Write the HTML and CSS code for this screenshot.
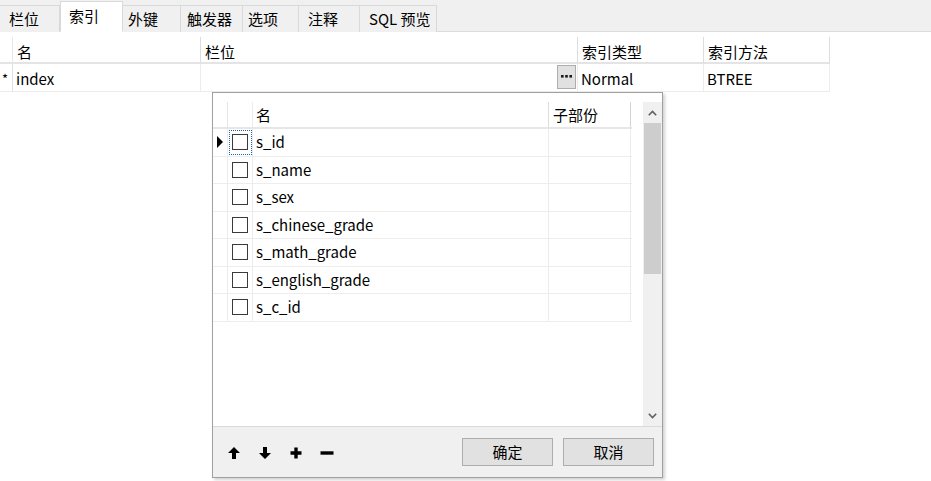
FILE: index.html
```html
<!DOCTYPE html>
<html>
<head>
<meta charset="utf-8">
<link rel="stylesheet" href="styles.css">
</head>
<body>
<div class="tabs">
  <div class="tab w60">栏位</div>
  <div class="tab active w63">索引</div>
  <div class="tab w58 p5">外键</div>
  <div class="tab w62 p6">触发器</div>
  <div class="tab w56 p5">选项</div>
  <div class="tab w61">注释</div>
  <div class="tab w77">SQL 预览</div>
</div>

<div class="grid">
  <div class="hc ind"></div>
  <div class="hc">名</div>
  <div class="hc">栏位</div>
  <div class="hc">索引类型</div>
  <div class="hc">索引方法</div>

  <div class="dc ind">*</div>
  <div class="dc">index</div>
  <div class="dc fieldcell"><span class="dots"><svg width="11" height="3" viewBox="0 0 11 3"><rect x="0" y="0" width="2.6" height="2.6" fill="#1a1a1a"/><rect x="4.2" y="0" width="2.6" height="2.6" fill="#1a1a1a"/><rect x="8.4" y="0" width="2.6" height="2.6" fill="#1a1a1a"/></svg></span></div>
  <div class="dc">Normal</div>
  <div class="dc">BTREE</div>
</div>

<div class="popup">
  <div class="plist">
    <div class="ptable">
      <div class="prow phead">
        <div class="pc pind"></div>
        <div class="pc pchk"></div>
        <div class="pc pname">名</div>
        <div class="pc psub">子部份</div>
      </div>
      <div class="prow">
        <div class="pc pind"><span class="tri"></span></div>
        <div class="pc pchk focus"><span class="cb"></span></div>
        <div class="pc pname">s_id</div>
        <div class="pc psub"></div>
      </div>
      <div class="prow">
        <div class="pc pind"></div>
        <div class="pc pchk"><span class="cb"></span></div>
        <div class="pc pname">s_name</div>
        <div class="pc psub"></div>
      </div>
      <div class="prow">
        <div class="pc pind"></div>
        <div class="pc pchk"><span class="cb"></span></div>
        <div class="pc pname">s_sex</div>
        <div class="pc psub"></div>
      </div>
      <div class="prow">
        <div class="pc pind"></div>
        <div class="pc pchk"><span class="cb"></span></div>
        <div class="pc pname">s_chinese_grade</div>
        <div class="pc psub"></div>
      </div>
      <div class="prow">
        <div class="pc pind"></div>
        <div class="pc pchk"><span class="cb"></span></div>
        <div class="pc pname">s_math_grade</div>
        <div class="pc psub"></div>
      </div>
      <div class="prow">
        <div class="pc pind"></div>
        <div class="pc pchk"><span class="cb"></span></div>
        <div class="pc pname">s_english_grade</div>
        <div class="pc psub"></div>
      </div>
      <div class="prow">
        <div class="pc pind"></div>
        <div class="pc pchk"><span class="cb"></span></div>
        <div class="pc pname">s_c_id</div>
        <div class="pc psub"></div>
      </div>
    </div>
    <div class="scroll">
      <div class="sbtn">
        <svg width="9" height="6" viewBox="0 0 9 6"><path d="M0.8 5.2 L4.5 1.5 L8.2 5.2" fill="none" stroke="#606060" stroke-width="1.6"/></svg>
      </div>
      <div class="thumb"></div>
      <div class="track"></div>
      <div class="sbtn">
        <svg width="9" height="6" viewBox="0 0 9 6"><path d="M0.8 0.8 L4.5 4.5 L8.2 0.8" fill="none" stroke="#606060" stroke-width="1.6"/></svg>
      </div>
    </div>
  </div>
  <div class="pfoot">
    <div class="icons">
      <svg class="ic" width="14" height="14" viewBox="0 0 14 14"><path d="M7 1 L13 7 L9 7 L9 13 L5 13 L5 7 L1 7 Z" fill="#000"/></svg>
      <svg class="ic" width="14" height="14" viewBox="0 0 14 14"><path d="M7 13 L13 7 L9 7 L9 1 L5 1 L5 7 L1 7 Z" fill="#000"/></svg>
      <svg class="ic" width="14" height="14" viewBox="0 0 14 14"><path d="M5.3 1.5 H8.7 V5.3 H12.5 V8.7 H8.7 V12.5 H5.3 V8.7 H1.5 V5.3 H5.3 Z" fill="#000"/></svg>
      <svg class="ic" width="14" height="14" viewBox="0 0 14 14"><rect x="0.5" y="5.3" width="13" height="3.4" fill="#000"/></svg>
    </div>
    <div class="btns">
      <div class="btn">确定</div>
      <div class="btn">取消</div>
    </div>
  </div>
</div>
</body>
</html>
```

FILE: styles.css
```css
* { box-sizing: border-box; }
html, body { margin: 0; padding: 0; background: #fff; }
body {
  width: 931px;
  height: 481px;
  position: relative;
  overflow: hidden;
  font-family: "Noto Sans CJK SC", "Noto Sans", sans-serif;
  font-size: 15px;
  color: #000;
}

.tabs {
  display: flex;
  align-items: flex-end;
  height: 32px;
  background: #f0f0f0;
  border-bottom: 1px solid #dcdcdc;
}
.tab {
  height: 27px;
  line-height: 26px;
  padding-left: 9px;
  border-right: 1px solid #d9d9d9;
  border-top: 1px solid #d9d9d9;
  background: #f0f0f0;
  white-space: nowrap;
  margin-bottom: -1px;
}
.tab.active {
  height: 31px;
  line-height: 28px;
  background: #fff;
  border-left: 1px solid #d9d9d9;
  border-bottom: 1px solid #fff;
  padding-left: 8px;
}
.w60 { width: 60px; }
.w63 { width: 63px; }
.w58 { width: 58px; }
.w62 { width: 62px; }
.w56 { width: 56px; }
.w61 { width: 61px; }
.w77 { width: 77px; }
.p5 { padding-left: 5px; }
.p6 { padding-left: 6px; }

.grid {
  margin-top: 5px;
  display: grid;
  grid-template-columns: 13px 188px 377px 126px 126px;
  grid-template-rows: 27px 28px;
  width: 830px;
}
.hc {
  border-right: 1px solid #dddddd;
  border-bottom: 2px solid #e4e4e4;
  padding-left: 4px;
  padding-top: 2px;
  line-height: 26px;
}
.hc.ind { border-right: 1px solid #e8e8e8; }
.dc {
  border-right: 1px solid #ececec;
  border-bottom: 1px solid #ececec;
  padding-left: 3px;
  padding-top: 2px;
  line-height: 26px;
}
.dc.ind { padding-left: 2px; font-size: 13px; border-right: 1px solid #e0e0e0; }
.fieldcell {
  display: flex;
  justify-content: flex-end;
  align-items: flex-start;
  padding: 1px 1px 0 0;
}
.dots {
  width: 19px;
  height: 24px;
  background: #e1e1e1;
  border: 1px solid #adadad;
  display: flex;
  align-items: center;
  justify-content: center;
  padding-bottom: 2px;
}
.dots svg { display: block; }

.popup {
  position: absolute;
  left: 212px;
  top: 92px;
  width: 451px;
  height: 386px;
  border: 1px solid #a0a0a0;
  box-shadow: 2px 2px 3px rgba(0,0,0,0.18);
  background: #f0f0f0;
  display: flex;
  flex-direction: column;
}
.plist {
  height: 334px;
  background: #fff;
  border-bottom: 1px solid #dadada;
  display: flex;
  padding-top: 9px;
}
.ptable { width: 419px; }
.prow {
  display: flex;
  height: 27.5px;
  border-bottom: 1px solid #ededed;
}
.prow.phead { height: 27px; border-bottom: 2px solid #e6e6e6; }
.pc { height: 100%; line-height: 26px; }
.pind { width: 15px; border-right: 1px solid #ececec; position: relative; }
.pchk { width: 25px; border-right: 1px solid #ececec; display: flex; align-items: center; justify-content: center; }
.pname { width: 296px; padding-left: 3px; border-right: 1px solid #ececec; }
.psub { width: 82px; border-right: 1px solid #ececec; }
.phead .pname { border-right: 1px solid #dddddd; }
.phead .psub { border-right: 1px solid #d4d4d4; padding-left: 4px; }
.phead .pind { border-right: 1px solid #e6e6e6; }

.cb {
  width: 16px;
  height: 16px;
  border: 1px solid #3a3a3a;
  background: #fff;
}
.focus { outline: 1px dotted #1a5fb4; outline-offset: -2px; }
.tri {
  position: absolute;
  left: 4px;
  top: 7px;
  width: 0;
  height: 0;
  border-top: 6px solid transparent;
  border-bottom: 6px solid transparent;
  border-left: 6px solid #000;
}

.scroll {
  margin-left: 11px;
  width: 19px;
  display: flex;
  flex-direction: column;
  background: #f0f0f0;
}
.sbtn {
  height: 21px;
  display: flex;
  align-items: center;
  justify-content: center;
}
.thumb { height: 151px; background: #cdcdcd; margin: 0 1px; }
.track { flex: 1; }

.pfoot {
  flex: 1;
  display: flex;
  align-items: center;
  justify-content: space-between;
  padding: 0 8px 0 14px;
}
.icons { display: flex; gap: 17px; padding-top: 2px; }
.ic { display: block; }
.btns { display: flex; gap: 10px; }
.btn {
  width: 91px;
  height: 28px;
  background: #e1e1e1;
  border: 1px solid #adadad;
  text-align: center;
  line-height: 26px;
  font-size: 15px;
}
```
